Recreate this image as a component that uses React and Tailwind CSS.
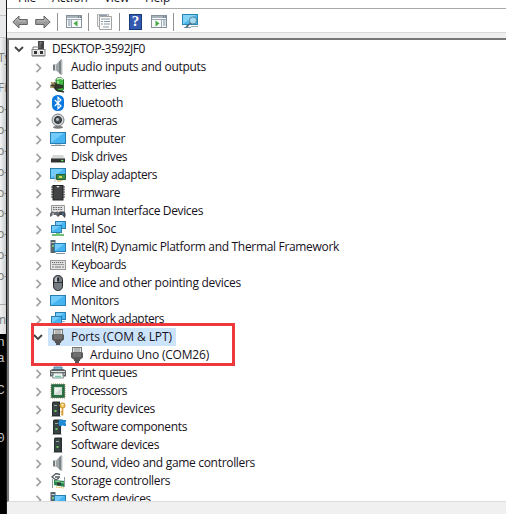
import { useLayoutEffect, useRef } from "react";

/* Text fitted to a fixed width through its letter spacing. */
function Label({ text, width, className = "" }) {
  const ref = useRef(null);
  useLayoutEffect(() => {
    const el = ref.current;
    const fit = () => {
      el.style.letterSpacing = "0px";
      const natural = el.getBoundingClientRect().width;
      el.style.letterSpacing = `${(width - natural) / text.length}px`;
    };
    fit();
    document.fonts?.ready.then(fit);
  }, [text, width]);
  return (
    <span ref={ref} className={`inline-block whitespace-pre ${className}`}>
      {text}
    </span>
  );
}

const blue = "#45b4f0";

function Monitor({ x = 0, y = 2, w = 15, h = 10 }) {
  return (
    <g>
      <rect x={x + 0.5} y={y + 0.5} width={w - 1} height={h - 1} fill={blue} stroke="#287fb0" />
      <path d={`M${x + 1} ${y + h - 1}V${y + 1}H${x + w - 2}z`} fill="#72cbfa" />
    </g>
  );
}

function Tower({ x = 4 }) {
  return (
    <g>
      <path d={`M${x} 1.5l1-1h7v14.5h-8z`} fill="#263030" />
      <path d={`M${x + 1} 2h5.5v12h-5.5z`} fill="#394544" />
      <path d={`M${x + 2} 4.5h3`} stroke="#9aa5a0" />
      <rect x={x + 2.5} y="9" width="2" height="2" fill="#6ec65b" />
      <path d={`M${x - 0.5} 15.5h9`} stroke="#9a9f9f" />
    </g>
  );
}

function Plug() {
  return (
    <g>
      <rect x="3.5" y=".5" width="9" height="5" fill="#e2e2e2" stroke="#777" />
      <path d="M6 1v4M8 1v4M10 1v4" stroke="#888" />
      <path d="M2 5.5h12v5l-2.5 2h-7L2 10.5z" fill="#5a5a5a" />
      <path d="M4 7h8M4 9h8" stroke="#858585" />
      <path d="M5 12h6v2H5zM6 14h4v2H6z" fill="#555" />
    </g>
  );
}

function Speaker() {
  return (
    <g>
      <path d="M3 5.5h3v6H3z" fill="#747b7f" />
      <path d="M6 5.5L11.5 0v16L6 11.5z" fill="#a0a7aa" />
      <path d="M9 3l2.5-3v16L9 14z" fill="#7d8487" />
      <path d="M5.5 5.5v6" stroke="#d9dddf" />
      <path d="M12 1v14" stroke="#c4c9cb" />
    </g>
  );
}

const glyphs = {
  root: (
    <g>
      <rect x="7" y="0" width="6" height="9" fill="#454545" />
      <path d="M8.5 2h2M8.5 4h1" stroke="#bbb" />
      <path d="M2 8.5V6h8" stroke="#777" fill="none" />
      <rect x="1" y="8.5" width="13" height="6" fill="#e7e7e7" stroke="#888" />
      <path d="M3 10h3v3H3zM9 10h3v3H9z" fill="#333" />
      <path d="M1 15.5h13" stroke="#b8b8b8" />
    </g>
  ),
  audio: <Speaker />,
  battery: (
    <g>
      <path d="M6 2.5C7 0 12 0 13.5 2.5V12c-1 3-6 3-7.5 1z" fill="#44b944" stroke="#247329" />
      <path d="M7 2.5c2-1.5 4-1.5 6 0" stroke="#dfeee0" strokeWidth="1.4" fill="none" />
      <path d="M8 4v4" stroke="#aff19e" strokeWidth="1.5" />
      <path d="M0 8l3-1 1-2 4 2 5 1v3l-6 1-4-1z" fill="#303629" />
      <path d="M1 5.5l4 2M0 10h4" stroke="#998549" strokeWidth="1.4" />
      <path d="M5 11c1 4 5 2 9 4" stroke="#2c302a" strokeWidth="1.5" fill="none" />
    </g>
  ),
  bluetooth: (
    <g>
      <rect x="2" y="0" width="12" height="16" rx="5.5" fill="#0878df" />
      <path d="M4.7 5l6.3 6-3 2.7V2.3L11 5l-6.3 6" stroke="#fff" strokeWidth="1.2" fill="none" />
    </g>
  ),
  camera: (
    <g>
      <ellipse cx="8" cy="14.3" rx="5" ry="1.4" fill="#777" />
      <circle cx="8" cy="7" r="6" fill="#d5d8d9" stroke="#777d80" />
      <circle cx="8" cy="7" r="3.5" fill="#4c5256" stroke="#252a2d" />
      <circle cx="7.5" cy="6.5" r="1.4" fill="#bac6ce" />
    </g>
  ),
  computer: (
    <g>
      <Monitor x={0} y={1} w={16} h={12} />
      <path d="M1 14.5h14" stroke="#83949d" />
      <path d="M5 13h6v1H5z" fill="#cbd3d6" />
    </g>
  ),
  disk: (
    <g>
      <path d="M3 6h10l2 4H1z" fill="#d5d7d8" />
      <path d="M1 9.5h14v4H1z" fill="#303534" />
      <path d="M11 11.5h2.5" stroke="#63dd5e" strokeWidth="1.3" />
    </g>
  ),
  display: (
    <g>
      <Monitor x={0} y={1} w={16} h={11} />
      <path d="M6.5 7.5h9v5h-9z" fill="#3e8d47" stroke="#246032" />
      <rect x="9" y="9" width="3" height="2" fill="#d4d75a" />
      <path d="M8 13v2M10 13v2M12 13v1" stroke="#c9a64c" />
      <path d="M5 7v8" stroke="#bec3c3" />
    </g>
  ),
  firmware: (
    <g>
      <path d="M1 2h3M1 4.5h3M1 7h3M1 9.5h3M1 12h3M12 2h3M12 4.5h3M12 7h3M12 9.5h3M12 12h3" stroke="#777" strokeWidth="1.3" />
      <rect x="3" y=".5" width="10" height="14.5" fill="#414345" stroke="#202223" />
      <path d="M6.5 1a1.5 1.5 0 003 0" fill="#dadada" />
    </g>
  ),
  hid: (
    <g>
      <path d="M1.5 2.5h13v7h-13z" fill="#e1e1e1" stroke="#999" />
      <path d="M3 4.5h10M3 6.5h10" stroke="#666" strokeDasharray="1.5 1" />
      <path d="M0 14c-1-3 1-6 3-5.500l2 1 2-1c2-.5 2 3 1 5.500l-2-2H3z" fill="#64676b" />
      <path d="M8 14c0-4 1-6 3-5.500h2c3 0 3 3.500 2 6.500l-3-3h-2z" fill="#3f434a" />
      <path d="M3 10v2M2 11h2" stroke="#ddd" strokeWidth=".7" />
      <circle cx="13" cy="11" r=".8" fill="#5aa4e2" />
    </g>
  ),
  network: (
    <g>
      <Monitor x={5} y={0} w={11} h={8} />
      <Monitor x={1} y={4} w={11} h={8} />
      <path d="M2 14h12" stroke="#61b66b" strokeWidth="1.8" />
      <path d="M6 12h4v3H6z" fill="#72c979" />
    </g>
  ),
  net2: (
    <g>
      <Monitor x={5} y={1} w={11} h={8} />
      <Monitor x={1} y={5} w={11} h={8} />
      <path d="M4 14.5h6M12 10.5h3" stroke="#8ebdd5" />
    </g>
  ),
  system: (
    <g>
      <path d="M.5 1h5v13h-5z" fill="#58656b" />
      <path d="M1.5 3.5h3" stroke="#cbd5d8" />
      <path d="M2 6h2v2H2z" fill="#72c379" />
      <Monitor x={4} y={4} w={12} h={9} />
      <path d="M6 14.5h9" stroke="#83949c" />
    </g>
  ),
  keyboard: (
    <g>
      <rect x=".5" y="3.5" width="15" height="9" fill="#e3e3e3" stroke="#999" />
      <path d="M2 5.5h12M2.5 7.5h12" stroke="#696969" strokeDasharray="1.2 .8" />
      <path d="M2 10h2M5 10h6M12 10h2" stroke="#777" />
    </g>
  ),
  mouse: (
    <g>
      <rect x="3.5" y=".5" width="9" height="15" rx="4.2" fill="#747b81" stroke="#24282b" />
      <path d="M5 6V3.5Q6 1.5 8 1.5V7H5z" fill="#b8bfc4" />
      <path d="M8 2v5M4 7.5h8" stroke="#303438" />
      <path d="M8 3v3" stroke="#15191c" strokeWidth="1.5" />
    </g>
  ),
  monitor: (
    <g>
      <Monitor x={0} y={2} w={16} h={11} />
    </g>
  ),
  plug: <Plug />,
  printer: (
    <g>
      <path d="M4 2h8v4H4z" fill="#77b8e0" stroke="#57839d" />
      <path d="M0 5.5L2.5 4h11L16 5.5v6H0z" fill="#5b6163" />
      <path d="M1 6.5h14" stroke="#e0e4e4" />
      <path d="M3.5 8h9l1 5h-11z" fill="#f1f7f5" stroke="#869294" />
      <path d="M5 11.5h6" stroke="#74c6a6" strokeWidth="1.5" />
      <path d="M1 9h1.5M13.5 9H15" stroke="#aab0b2" strokeWidth="2" />
    </g>
  ),
  processor: (
    <g>
      <rect x="1" y="1" width="14" height="14" fill="none" stroke="#a59853" strokeDasharray="1 1" />
      <rect x="1.8" y="1.8" width="12.4" height="12.4" fill="#2c7444" stroke="#20583a" />
      <rect x="4" y="4" width="8" height="8" fill="#d2dcd4" />
      <path d="M5 11V5h6z" fill="#eef3ee" />
    </g>
  ),
  security: (
    <g>
      <Tower x={2} />
      <circle cx="12.5" cy="4.5" r="2.6" fill="#f2cb61" stroke="#c48a27" />
      <circle cx="12.5" cy="3.5" r=".8" fill="#fff" />
      <path d="M12.5 7v7.5M12.5 11h-2M12.5 13.5h-1.5" stroke="#d9a038" strokeWidth="1.6" />
    </g>
  ),
  component: (
    <g>
      <Tower x={3} />
      <path d="M9 1h2c0-1 2-1 2 0h3v2c-1 0-1 1.5 0 1.5V7h-2.5c0-1-1.5-1-1.5 0H9V5C8 5 8 3 9 3z" fill="#218bd4" />
    </g>
  ),
  software: <Tower x={4} />,
  storage: (
    <g>
      <path d="M10 1.5L6 .5 2 4l4 3 3-2M5 4h5" stroke="#525d60" strokeWidth="1.3" fill="none" />
      <path d="M4 7l11 1v6L4 12z" fill="#27864c" />
      <path d="M5 8l9 2" stroke="#8cd59b" />
      <path d="M7 9.5h4v3H7z" fill="#343c3a" />
      <path d="M6 14l8 1" stroke="#dfb642" strokeDasharray="1.5 .8" />
      <path d="M2.5 6v9M14.5 4v10" stroke="#929c9d" />
    </g>
  ),
};

const Icon = ({ name }) => (
  <svg className="h-4 w-4 shrink-0" viewBox="0 0 16 16">
    {glyphs[name]}
  </svg>
);

const Closed = () => (
  <svg className="mt-[2px] h-[10px] w-[10px] shrink-0" viewBox="0 0 10 10">
    <path d="M2.500 .8L6.500 5 2.500 9.200" fill="none" stroke="#a2a2a2" strokeWidth="1.7" />
  </svg>
);

const Opened = () => (
  <svg className="h-[10px] w-[10px] shrink-0" viewBox="0 0 10 10">
    <path d="M1 3l4 4 4-4" fill="none" stroke="#424242" strokeWidth="1.8" />
  </svg>
);

const before = [
  ["Audio inputs and outputs", "audio", 135],
  ["Batteries", "battery", 45],
  ["Bluetooth", "bluetooth", 52],
  ["Cameras", "camera", 46],
  ["Computer", "computer", 54],
  ["Disk drives", "disk", 56],
  ["Display adapters", "display", 86],
  ["Firmware", "firmware", 49],
  ["Human Interface Devices", "hid", 132],
  ["Intel Soc", "network", 45],
  ["Intel(R) Dynamic Platform and Thermal Framework", "system", 268],
  ["Keyboards", "keyboard", 55],
  ["Mice and other pointing devices", "mouse", 170],
  ["Monitors", "monitor", 48],
  ["Network adapters", "net2", 93],
];

const after = [
  ["Print queues", "printer", 66],
  ["Processors", "processor", 56],
  ["Security devices", "security", 84],
  ["Software components", "component", 116],
  ["Software devices", "software", 88],
  ["Sound, video and game controllers", "audio", 184],
  ["Storage controllers", "storage", 99],
  ["System devices", "system", 80],
];

const Row = ({ item: [text, icon, width] }) => (
  <div className="flex h-[18px] items-center pl-[25px]">
    <Closed />
    <div className="ml-[6px] flex items-center gap-[5px]">
      <Icon name={icon} />
      <Label text={text} width={width} />
    </div>
  </div>
);

const Divider = () => <div className="h-[18px] w-px bg-[#929292]" />;

const Arrow = ({ flip }) => (
  <svg className={flip ? "h-[14px] w-4 -scale-x-100" : "h-[14px] w-4"} viewBox="0 0 16 14">
    <path d="M.8 7L7 1v3.5h8.3v5H7V13z" fill="#9b9b9b" stroke="#666" />
    <path d="M2.5 7L6 3.6V6h8" fill="none" stroke="#bcbcbc" />
  </svg>
);

const Pane = ({ right }) => (
  <svg className="h-[14px] w-4" viewBox="0 0 16 14">
    <rect x=".5" y=".5" width="15" height="12" fill="#fafafa" stroke="#87939c" />
    <path d="M1 2h14" stroke="#9eabb5" strokeWidth="1.8" />
    <path d="M12 2h1M14 2h1" stroke="#456" />
    {right ? (
      <g>
        <path d="M10.5 4v8M1 4.5h14" stroke="#9daab2" />
        <path d="M12 6h2.5M12 8h2.5M12 10h2.5" stroke="#6e8ba0" />
        <path d="M4.5 5.5v6l4-3z" fill="#42a943" />
      </g>
    ) : (
      <g>
        <path d="M5.5 4v8M1 4.5h14" stroke="#9daab2" />
        <path d="M2 6h2.5M2 8h2.5M2 10h2.5" stroke="#6e8ba0" />
        <path d="M11.5 5.5v6l-4-3z" fill="#42a943" />
      </g>
    )}
  </svg>
);

function Toolbar() {
  return (
    <div className="flex h-[24px] shrink-0 items-center border-t border-[#aaa] bg-white pl-[5px] pt-[2px]">
      <Arrow />
      <div className="ml-[7px] flex"><Arrow flip /></div>
      <div className="ml-[6px]"><Divider /></div>
      <div className="ml-[8px]"><Pane /></div>
      <div className="ml-[6px]"><Divider /></div>
      <svg className="ml-[8px] h-4 w-[15px]" viewBox="0 0 15 16">
        <path d="M.5.5h11v12H.5z" fill="#f1f1f1" stroke="#b0b0b0" />
        <path d="M2.500 2.500h12v13h-12z" fill="#fafafa" stroke="#a2a2a2" />
        <path d="M2 1.500h8M4 5h9M4 7.500h2M7 7.500h6M4 10h2M7 10h6M6 13h6" stroke="#8c9bab" />
      </svg>
      <div className="ml-[7px]"><Divider /></div>
      <div className="ml-[9px] flex h-4 w-[13px] items-center justify-center border border-[#173a7b] bg-[#3459b0] font-['Liberation_Serif',serif] text-[15px] font-bold leading-none text-white">?</div>
      <div className="ml-[9px]"><Pane right /></div>
      <div className="ml-[6px]"><Divider /></div>
      <svg className="ml-[8px] h-[15px] w-[17px]" viewBox="0 0 17 15">
        <rect x=".5" y=".5" width="15" height="10" fill="#4bb9ed" stroke="#2888b4" />
        <path d="M1 10V1h13z" fill="#82d3f6" />
        <path d="M2 13.5h7M5 11v2" stroke="#799" />
        <circle cx="11" cy="6.5" r="3.6" fill="#a5dcf4" stroke="#56859c" />
        <path d="M8.5 9L4 13.5" stroke="#4f6c7b" strokeWidth="1.6" />
        <path d="M9 12.5h7" stroke="#9aa" />
      </svg>
    </div>
  );
}

/* Narrow strip of the windows lying behind the console. */
function Backdrop() {
  return (
    <div className="flex h-full w-[6px] shrink-0 flex-col overflow-hidden font-['Open_Sans','Noto_Sans',sans-serif] text-[12px] text-[#777]">
      <div className="h-4 shrink-0 border-b border-[#c4c4c4] bg-[#ececec]" />
      <div className="h-[22px] shrink-0 border-b border-[#c8c8c8] bg-[#e8eaeb]" />
      <div className="h-[266px] shrink-0 bg-linear-to-r from-[#f3f5f5] to-[#c9cccc]">
        <div className="mt-[9px] h-[21px] -indent-[2px] leading-[21px]">Ty</div>
        <div className="mt-[9px] h-[21px] -indent-[2px] leading-[21px]">Fi</div>
        {[0, 1, 2, 3, 4, 5, 6, 7, 8].map((n) => (
          <div key={n} className="h-[20.9px] -indent-[3px] leading-[21px]">p-</div>
        ))}
      </div>
      <div className="h-[30px] shrink-0 border-t border-[#aaa] bg-linear-to-r from-[#f0f0f0] to-[#d8d8d8] -indent-[5px] leading-[30px]">m</div>
      <div className="flex-1 bg-black font-['Liberation_Mono',monospace] text-[13px] text-[#c4c4c4]">
        <div className="h-4 -indent-[3px] leading-[18px]">n</div>
        <div className="h-8 -indent-[3px] leading-[18px]">a</div>
        <div className="h-12 -indent-[3px] leading-[18px]">C</div>
        <div className="h-4 -indent-[3px] leading-[18px]">0</div>
      </div>
    </div>
  );
}

export default function App() {
  return (
    <div className="flex h-[514px] w-[506px] overflow-hidden bg-[#f0f0f0] font-['Open_Sans','Noto_Sans',sans-serif] text-[12px] leading-[18px] text-[#17121b]">
      <Backdrop />
      <div className="w-px shrink-0 bg-[#17191b]" />
      <div className="flex min-w-0 flex-1 flex-col">
        <div className="flex h-2 shrink-0 items-end overflow-hidden bg-white pb-px pl-[11px]">
          <div className="flex gap-4">
            <Label text="File" width={18} />
            <Label text="Action" width={36} />
            <Label text="View" width={25} />
            <Label text="Help" width={25} />
          </div>
        </div>
        <Toolbar />
        <div className="h-[6px] shrink-0 border-t border-[#d8d8d8] bg-[#efefef]" />
        <div className="relative h-[464px] shrink-0 overflow-hidden border-b border-l-2 border-t-2 border-b-[#dcdcdc] border-l-[#777] border-t-[#777] bg-white">
          <div className="flex h-[18px] items-center pl-[5px]">
            <Opened />
            <div className="ml-[7px] flex items-center gap-[5px]">
              <Icon name="root" />
              <Label text="DESKTOP-3592JF0" width={93} />
            </div>
          </div>
          {before.map((item) => (
            <Row key={item[0]} item={item} />
          ))}
          <div className="flex h-[18px] items-center pl-[24px]">
            <Opened />
            <div className="ml-[5px] flex h-[18px] w-[128px] items-center gap-[5px] bg-[#cce4fb] pl-[2px]">
              <Icon name="plug" />
              <Label text="Ports (COM & LPT)" width={101} />
            </div>
          </div>
          <div className="flex h-[18px] items-center gap-[5px] pl-[60px]">
            <Icon name="plug" />
            <Label text="Arduino Uno (COM26)" width={119} />
          </div>
          {after.map((item) => (
            <Row key={item[0]} item={item} />
          ))}
          <div className="absolute left-[22px] top-[283px] h-[43px] w-[204px] border-[3px] border-[#ed383c]" />
        </div>
      </div>
    </div>
  );
}
